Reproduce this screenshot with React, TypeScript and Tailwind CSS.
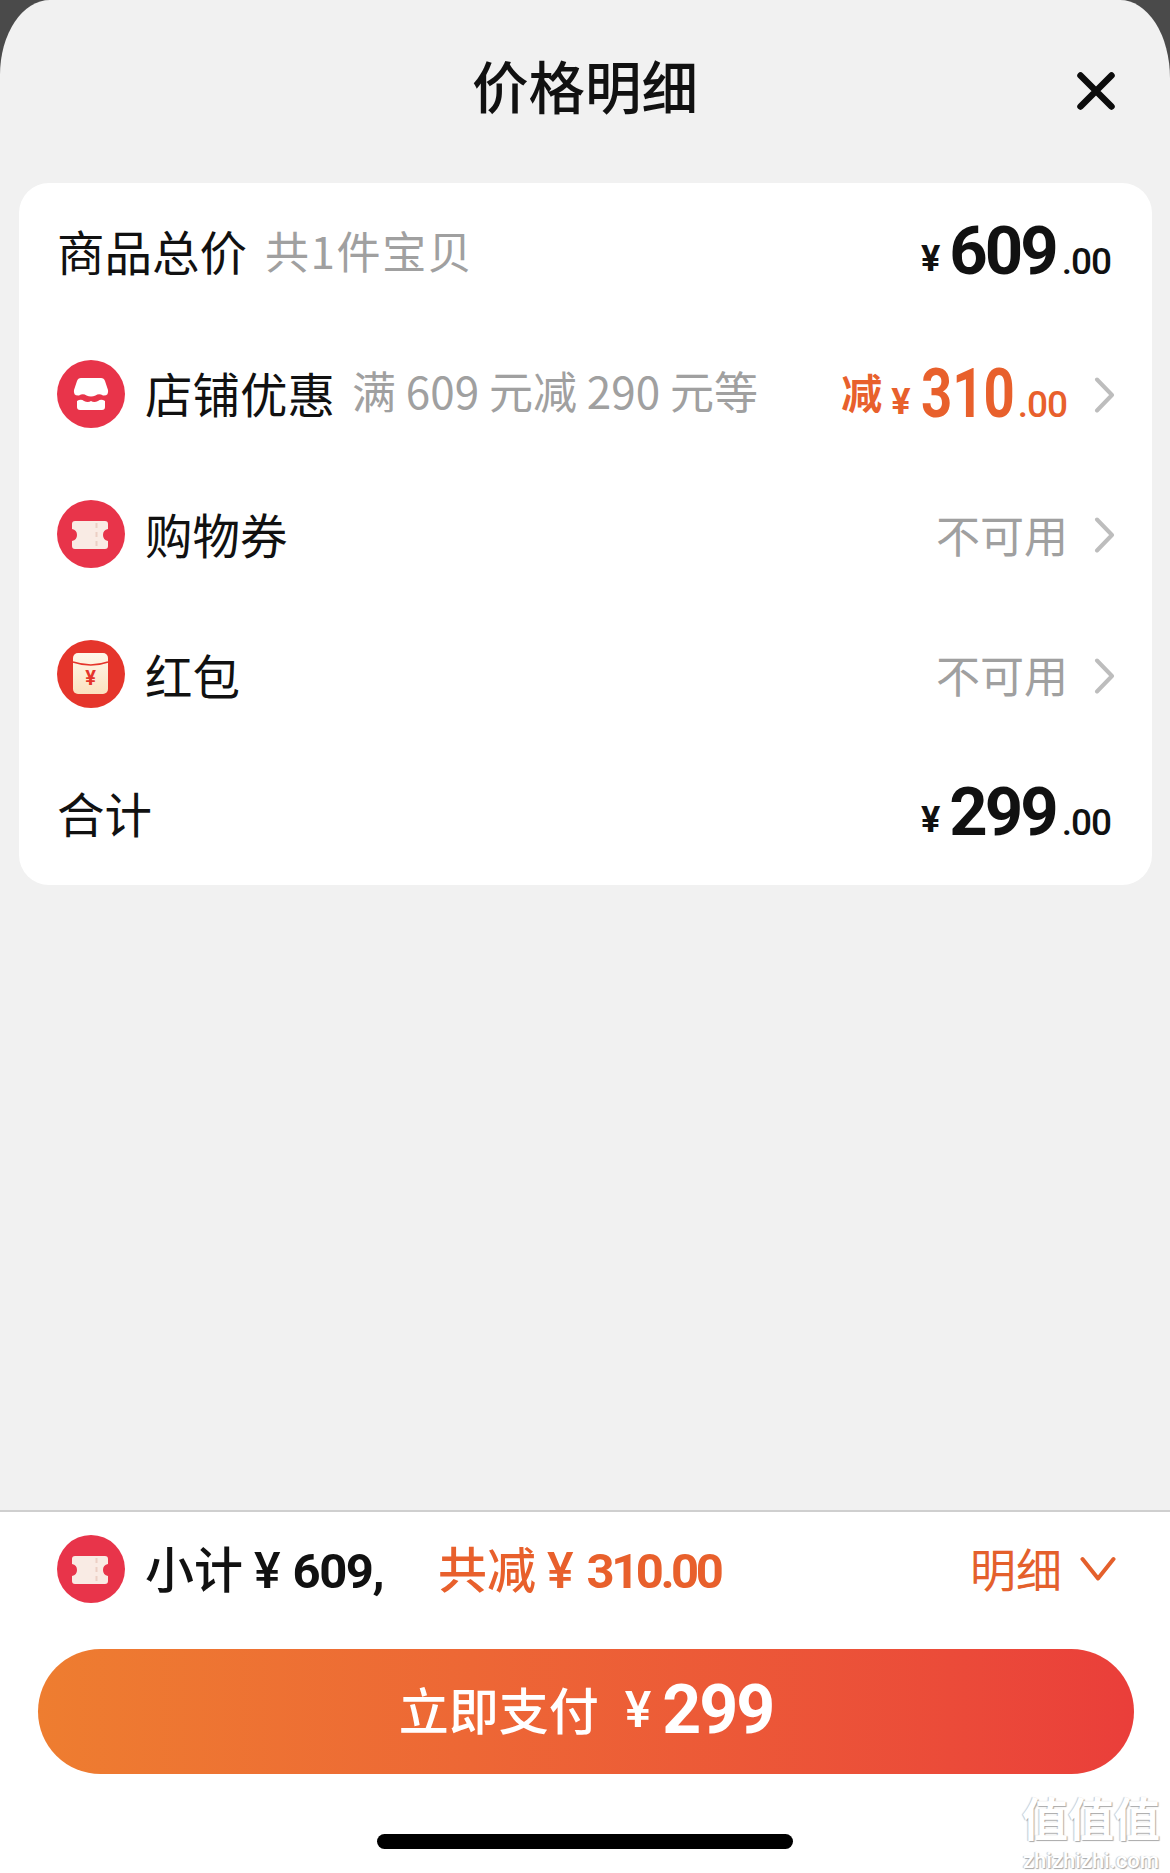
const cjk = "font-['Noto_Sans_CJK_SC',sans-serif]";

function Chevron() {
  return (
    <svg width="22" height="36" viewBox="0 0 22 36" className="mt-[3px] shrink-0" fill="none">
      <path d="M4 2.5 L19 18 L4 33.5" stroke="#bdbdbd" strokeWidth="4" strokeLinecap="round" strokeLinejoin="round" />
    </svg>
  );
}

function StoreIcon() {
  return (
    <svg width="68" height="68" viewBox="0 0 68 68" className="shrink-0">
      <circle cx="34" cy="34" r="34" fill="#e8344a" />
      <path d="M24 18 H44 Q47 18 48 21 L51 30 Q52 36 46 35.5 Q42 33 38.5 35.5 Q34 37.5 29.5 35.5 Q26 33 22 35.5 Q16 36 17 30 L20 21 Q21 18 24 18 Z" fill="#fff" />
      <path d="M20 41 Q24 38.5 27 41 Q31 43 34 41 Q37 43 41 41 Q44 38.5 48 41 V47 Q48 50 45 50 H23 Q20 50 20 47 Z" fill="#fff" />
    </svg>
  );
}

function TicketIcon() {
  return (
    <svg width="68" height="68" viewBox="0 0 68 68" className="shrink-0">
      <circle cx="34" cy="34" r="34" fill="#e8344a" />
      <path d="M18 21 H48 Q51 21 51 24 V29 Q46 30 46 35 Q46 40 51 41 V46 Q51 49 48 49 H18 Q15 49 15 46 V41 Q20 40 20 35 Q20 30 15 29 V24 Q15 21 18 21 Z" fill="#f9ebe4" />
      <path d="M39.5 23 V48" stroke="#eccfc4" strokeWidth="2" strokeDasharray="5 4" />
    </svg>
  );
}

function EnvelopeIcon() {
  return (
    <svg width="68" height="68" viewBox="0 0 68 68" className="shrink-0">
      <defs>
        <linearGradient id="env" x1="0" y1="0" x2="0" y2="1">
          <stop offset="0" stopColor="#fff7ea" />
          <stop offset="1" stopColor="#fbe2bf" />
        </linearGradient>
      </defs>
      <circle cx="34" cy="34" r="34" fill="#e5352b" />
      <rect x="16" y="13" width="35" height="41" rx="5" fill="url(#env)" />
      <path d="M16 22 Q34 28 51 22" stroke="#e5352b" strokeWidth="1.6" fill="none" />
      <text x="33.5" y="45" textAnchor="middle" fontSize="20" fontWeight="700" fill="#e5352b" fontFamily="Roboto, sans-serif">¥</text>
    </svg>
  );
}

function Row({ children, lift = false }: { children: React.ReactNode; lift?: boolean }) {
  return (
    <div className={lift ? "flex h-[140.4px] items-center justify-between pb-[4px]" : "flex h-[140.4px] items-center justify-between"}>
      {children}
    </div>
  );
}

function Label({ children }: { children: React.ReactNode }) {
  return <span className={`${cjk} text-[47.5px] leading-none text-[#111]`}>{children}</span>;
}

function Hint({ children }: { children: React.ReactNode }) {
  return <span className={`${cjk} text-[44px] leading-none text-[#a0a0a0]`}>{children}</span>;
}

function Price({ big }: { big: string }) {
  return (
    <div className="flex items-baseline pr-[41px] font-['Roboto',sans-serif] font-bold text-[#111]">
      <span className="-translate-y-[3px] text-[36px] leading-none">¥</span>
      <span className="ml-[9px] text-[67px] leading-none tracking-[-3px]">{big}</span>
      <span className="ml-[6px] text-[37px] leading-none font-medium tracking-[-1px]">.00</span>
    </div>
  );
}

export default function App() {
  return (
    <div className="h-[1873px] w-[1170px] overflow-hidden bg-[#4a4a4a]">
      <div className="relative flex h-full flex-col rounded-tl-[50px_75px] rounded-tr-[50px_78px] bg-[#f1f1f1]">
        <header className="flex h-[183px] items-start justify-between pr-[55px] pl-[472px]">
          <h1 className={`${cjk} mt-[50px] text-[56.5px] leading-[68px] font-medium text-[#111]`}>价格明细</h1>
          <svg width="38" height="38" viewBox="0 0 38 38" className="mt-[72px]" fill="none">
            <path d="M3.5 3.5 L34.5 34.5 M34.5 3.5 L3.5 34.5" stroke="#0c0c0c" strokeWidth="6.5" strokeLinecap="round" />
          </svg>
        </header>

        <section className="mr-[18px] ml-[19px] h-[702px] rounded-[30px] bg-white pl-[38px]">
          <Row lift>
            <div className="flex items-center gap-[18px]">
              <Label>商品总价</Label>
              <span className="tracking-[1.6px]"><Hint>共1件宝贝</Hint></span>
            </div>
            <Price big="609" />
          </Row>
          <Row>
            <div className="flex items-center">
              <StoreIcon />
              <div className="mr-[17px] ml-[20px]"><Label>店铺优惠</Label></div>
              <span className="-translate-y-[2px]"><Hint>满 609 元减 290 元等</Hint></span>
            </div>
            <div className="flex items-center gap-[26px] pr-[37px]">
              <div className="flex items-center text-[#e8602c]">
                <span className={`${cjk} -translate-y-[2px] text-[41px] leading-none font-bold`}>减</span>
                <div className="ml-[9px] flex items-baseline">
                  <span className="-translate-y-[3px] font-['Roboto',sans-serif] text-[36px] leading-none font-bold">¥</span>
                  <span className="ml-[10px] inline-block w-[92px] origin-left scale-x-[0.79] font-['Roboto',sans-serif] text-[69px] leading-none font-bold">310</span>
                  <span className="ml-[5px] font-['Roboto',sans-serif] text-[37px] leading-none font-medium tracking-[-1px]">.00</span>
                </div>
              </div>
              <Chevron />
            </div>
          </Row>
          <Row>
            <div className="flex items-center gap-[20px]">
              <TicketIcon />
              <Label>购物券</Label>
            </div>
            <div className="flex items-center gap-[25px] pr-[37px]">
              <Hint>不可用</Hint>
              <Chevron />
            </div>
          </Row>
          <Row>
            <div className="flex items-center gap-[20px]">
              <EnvelopeIcon />
              <Label>红包</Label>
            </div>
            <div className="flex items-center gap-[25px] pr-[37px]">
              <Hint>不可用</Hint>
              <Chevron />
            </div>
          </Row>
          <Row lift>
            <Label>合计</Label>
            <Price big="299" />
          </Row>
        </section>

        <div className="flex-1" />

        <footer className="h-[363px] border-t-2 border-[#cfcfcf] bg-white">
          <div className="flex h-[114px] items-center justify-between pr-[54px] pl-[57px]">
            <div className="flex items-center">
              <TicketIcon />
              <div className="ml-[20px] flex items-baseline text-[#111]">
                <span className={`${cjk} text-[49px] leading-none font-medium`}>小计</span>
                <span className="ml-[11px] font-['Roboto',sans-serif] text-[50px] leading-none font-medium">¥</span>
                <span className="ml-[12px] font-['Roboto',sans-serif] text-[49px] leading-none font-bold tracking-[-1.5px]">609,</span>
              </div>
              <div className="ml-[55px] flex items-baseline text-[#e8602c]">
                <span className={`${cjk} text-[49px] leading-none font-medium`}>共减</span>
                <span className="ml-[11px] font-['Roboto',sans-serif] text-[50px] leading-none font-medium">¥</span>
                <span className="ml-[13px] font-['Roboto',sans-serif] text-[49px] leading-none font-bold tracking-[-3.5px]">310.00</span>
              </div>
            </div>
            <div className="flex items-center gap-[18px] text-[#e4602c]">
              <span className={`${cjk} -translate-y-[2px] text-[46px] leading-none`}>明细</span>
              <svg width="36" height="26" viewBox="0 0 36 26" fill="none">
                <path d="M2.5 3 L18 22.5 L33.5 3" stroke="#e4602c" strokeWidth="4" strokeLinecap="round" strokeLinejoin="round" />
              </svg>
            </div>
          </div>
          <button className="mx-[38px] mt-[23px] flex h-[125px] w-[1096px] items-center justify-center rounded-full bg-gradient-to-r from-[#ee7d30] to-[#ea3e3a] pb-[4px] text-white">
            <span className={`${cjk} -translate-y-[2px] text-[50px] leading-none font-medium`}>立即支付</span>
            <span className="ml-[26px] font-['Roboto',sans-serif] text-[50px] leading-none font-medium">¥</span>
            <span className="ml-[11px] font-['Roboto',sans-serif] text-[68px] leading-none font-bold tracking-[-2px]">299</span>
          </button>
          <div className="mx-auto mt-[60px] h-[15px] w-[416px] rounded-full bg-black" />
        </footer>

        <div className="absolute top-[1783px] left-[1020px] flex w-[142px] flex-col items-center text-white [text-shadow:1px_1px_1px_#a8a8a8,-1px_0_1px_#c8c8c8]">
          <span className={`${cjk} text-[46px] leading-[67px] font-bold whitespace-nowrap`}>值值值</span>
          <span className="font-['Roboto',sans-serif] text-[22px] leading-[22px] font-medium">zhizhizhi.com</span>
        </div>
      </div>
    </div>
  );
}
